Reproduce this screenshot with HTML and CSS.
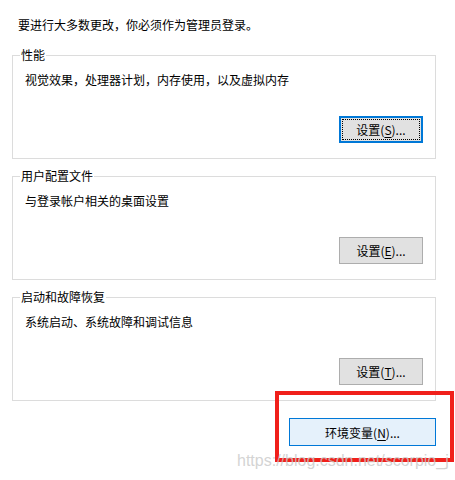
FILE: index.html
```html
<!DOCTYPE html>
<html lang="zh-CN">
<head>
    <meta charset="UTF-8">
    <title>系统属性 - 高级</title>
    <link rel="stylesheet" href="styles.css">
</head>
<body>

    <div class="dialog">
        <p class="intro">要进行大多数更改，你必须作为管理员登录。</p>

        <!-- 性能 -->
        <fieldset class="group">
            <legend>性能</legend>
            <p class="desc">视觉效果，处理器计划，内存使用，以及虚拟内存</p>
            <div class="actions">
                <button class="btn focused"><span class="focus-ring">设置(<u>S</u>)...</span></button>
            </div>
        </fieldset>

        <!-- 用户配置文件 -->
        <fieldset class="group">
            <legend>用户配置文件</legend>
            <p class="desc">与登录帐户相关的桌面设置</p>
            <div class="actions">
                <button class="btn">设置(<u>E</u>)...</button>
            </div>
        </fieldset>

        <!-- 启动和故障恢复 -->
        <fieldset class="group">
            <legend>启动和故障恢复</legend>
            <p class="desc">系统启动、系统故障和调试信息</p>
            <div class="actions">
                <button class="btn">设置(<u>T</u>)...</button>
            </div>
        </fieldset>

        <div class="env-row">
            <button class="btn env-btn">环境变量(<u>N</u>)...</button>
            <div class="highlight"></div>
        </div>
    </div>

    <div class="watermark">https://blog.csdn.net/scorpio_j</div>

</body>
</html>
```

FILE: styles.css
```css
* {
    margin: 0;
    padding: 0;
    box-sizing: border-box;
}
body {
    width: 455px;
    height: 480px;
    background: #ffffff;
    color: #000000;
    font-family: "Noto Sans CJK SC", "Microsoft YaHei", sans-serif;
    font-size: 12px;
    line-height: 16px;
    position: relative;
    overflow: hidden;
}
.dialog {
    padding: 17px 19px 0 12px;
}
.intro {
    margin-left: 6px;
    height: 16px;
    margin-bottom: 14px;
}
.group {
    border: 1px solid #dcdcdc;
    padding: 9px 12px 15px 12px;
    margin-bottom: 9px;
}
.group legend {
    margin-left: -5px;
    padding: 0 1px;
    line-height: 16px;
}
.actions {
    display: flex;
    justify-content: flex-end;
    margin-top: 28px;
}
.btn {
    width: 84px;
    height: 27px;
    font-family: inherit;
    font-size: 12px;
    color: #000;
    background: #e1e1e1;
    border: 1px solid #adadad;
    display: flex;
    align-items: center;
    justify-content: center;
}
.btn u {
    text-underline-offset: 2px;
}
.btn.focused {
    border: 2px solid #0078d7;
    padding: 1px;
}
.focus-ring {
    width: 100%;
    height: 100%;
    border: 1px dotted #000;
    display: flex;
    align-items: center;
    justify-content: center;
}
.env-row {
    display: flex;
    justify-content: flex-end;
    position: relative;
    margin-top: 17px;
}
.env-btn {
    width: 147px;
    height: 28px;
    background: #e5f1fb;
    border: 1px solid #0078d7;
}
.highlight {
    position: absolute;
    left: 263px;
    top: -27px;
    width: 179px;
    height: 71px;
    border: 4px solid #f0201a;
}
.watermark {
    position: absolute;
    left: 237px;
    top: 453px;
    font-family: "Liberation Sans", Arial, sans-serif;
    font-size: 16px;
    color: rgba(200, 200, 200, 0.8);
    white-space: nowrap;
}
```
